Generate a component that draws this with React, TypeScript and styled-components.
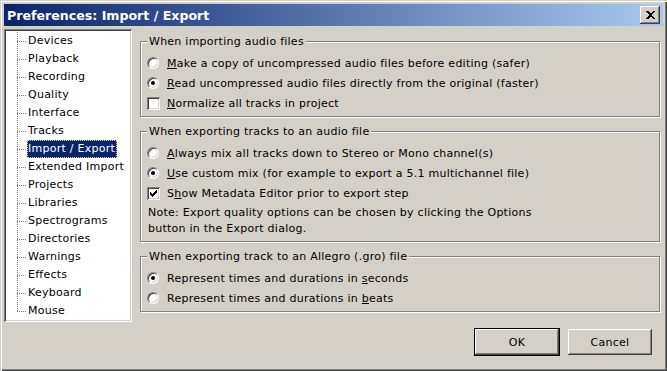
import React from 'react';
import styled, {createGlobalStyle} from "styled-components";

const GlobalStyle = createGlobalStyle`
  html, body {
    margin: 0;
    padding: 0;
    background: #d4d0c8;
  }
  body {
    font-family: "DejaVu Sans", sans-serif;
    font-size: 11px;
    letter-spacing: 0.25px;
    color: #000;
  }
`

const pages = [
    'Devices', 'Playback', 'Recording', 'Quality', 'Interface', 'Tracks',
    'Import / Export', 'Extended Import', 'Projects', 'Libraries', 'Spectrograms',
    'Directories', 'Warnings', 'Effects', 'Keyboard', 'Mouse',
]

const Radio = (props: { checked?: boolean }) => (
    <RadioBox $checked={props.checked}/>
)

const CheckBox = (props: { checked?: boolean }) => (
    <Check>
        {props.checked && (
            <svg width="7" height="7" viewBox="0 0 7 7" shapeRendering="crispEdges">
                <path d="M0 2h1v1h1v1h1v-1h1v-1h1v-1h1v-1h1v3h-1v1h-1v1h-1v1h-1v1h-1v-1h-1v-1h-1z" fill="#000"/>
            </svg>
        )}
    </Check>
)

const App = () => {
    return (
        <Window>
            <GlobalStyle/>
            <TitleBar>
                <Title>Preferences: Import / Export</Title>
                <CloseButton>
                    <svg width="9" height="8" viewBox="0 0 9 8" shapeRendering="crispEdges">
                        <path d="M0 0h2l2.5 2.5L7 0h2L5.5 4L9 8H7L4.5 5.5L2 8H0l3.5-4z" fill="#000"/>
                    </svg>
                </CloseButton>
            </TitleBar>

            <Body>
                <Tree>
                    {pages.map((p, i) => (
                        <TreeRow key={p}>
                            <Connector $last={i === pages.length - 1}/>
                            <TreeLabel $selected={p === 'Import / Export'}>{p}</TreeLabel>
                        </TreeRow>
                    ))}
                </Tree>

                <Pane>
                    <Group>
                        <Caption>When importing audio files</Caption>
                        <Row><Radio/><span><u>M</u>ake a copy of uncompressed audio files before editing (safer)</span></Row>
                        <Row><Radio checked/><span><u>R</u>ead uncompressed audio files directly from the original (faster)</span></Row>
                        <Row><CheckBox/><span><u>N</u>ormalize all tracks in project</span></Row>
                    </Group>

                    <Group $bottom={4}>
                        <Caption>When exporting tracks to an audio file</Caption>
                        <Row><Radio/><span><u>A</u>lways mix all tracks down to Stereo or Mono channel(s)</span></Row>
                        <Row><Radio checked/><span><u>U</u>se custom mix (for example to export a 5.1 multichannel file)</span></Row>
                        <Row><CheckBox checked/><span>S<u>h</u>ow Metadata Editor prior to export step</span></Row>
                        <Note>
                            Note: Export quality options can be chosen by clicking the Options<br/>
                            button in the Export dialog.
                        </Note>
                    </Group>

                    <Group>
                        <Caption>When exporting track to an Allegro (.gro) file</Caption>
                        <Row><Radio checked/><span>Represent times and durations in <u>s</u>econds</span></Row>
                        <Row><Radio/><span>Represent times and durations in <u>b</u>eats</span></Row>
                    </Group>
                </Pane>
            </Body>

            <Footer>
                <Button $default>OK</Button>
                <Button>Cancel</Button>
            </Footer>
        </Window>
    );
};

export default App;

const raised = `
  box-shadow: inset -1px -1px #404040, inset 1px 1px #fff,
              inset -2px -2px #808080, inset 2px 2px #d4d0c8;
`

const Window = styled.div`
  width: 667px;
  height: 371px;
  box-sizing: border-box;
  padding: 4px;
  display: flex;
  flex-direction: column;
  background: #d4d0c8;
  box-shadow: inset 1px 1px #d4d0c8, inset 2px 2px #fff,
              inset -1px -1px #404040, inset -2px -2px #808080;
`

const TitleBar = styled.div`
  height: 22px;
  flex: none;
  display: flex;
  align-items: center;
  justify-content: space-between;
  padding: 0 3px;
  background: linear-gradient(to right, #0a246a, #a6caf0);
`

const Title = styled.div`
  color: #fff;
  font-weight: bold;
  font-size: 12.6px;
  letter-spacing: 0;
  font-family: "DejaVu Sans", sans-serif;
`

const CloseButton = styled.div`
  width: 20px;
  height: 18px;
  display: grid;
  place-items: center;
  background: #d4d0c8;
  ${raised}
`

const Body = styled.div`
  display: flex;
  gap: 8px;
  padding-top: 3px;
`

const Tree = styled.div`
  width: 128px;
  height: 293px;
  box-sizing: border-box;
  padding: 3px 0 0 13px;
  background: #fff;
  box-shadow: inset 1px 1px #808080, inset -1px -1px #fff,
              inset 2px 2px #404040, inset -2px -2px #d4d0c8;
`

const TreeRow = styled.div`
  height: 18px;
  display: flex;
  align-items: center;
`

const Connector = styled.span<{ $last?: boolean }>`
  width: 10px;
  height: 18px;
  flex: none;
  background:
    repeating-linear-gradient(to right, #808080 0 1px, transparent 1px 2px) 0 9px / 9px 1px no-repeat,
    repeating-linear-gradient(to bottom, #808080 0 1px, transparent 1px 2px) 0 0 / 1px ${p => p.$last ? '10px' : '18px'} no-repeat;
`

const TreeLabel = styled.span<{ $selected?: boolean }>`
  height: 18px;
  line-height: 18px;
  padding: 0 2px 0 1px;
  white-space: nowrap;
  color: ${p => p.$selected ? '#fff' : '#000'};
  background: ${p => p.$selected ? '#0a246a' : 'transparent'};
  outline: ${p => p.$selected ? '1px dotted #e8d890' : 'none'};
  outline-offset: -1px;
`

const Pane = styled.div`
  flex: 1;
  display: flex;
  flex-direction: column;
  gap: 14px;
  padding: 12px 3px 0 0;
`

const Group = styled.div<{ $bottom?: number }>`
  display: flex;
  flex-direction: column;
  padding: 0 6px ${p => p.$bottom ?? 3}px 6px;
  border: 1px solid #808080;
  box-shadow: inset 1px 1px #fff, 1px 1px #fff;
`

const Caption = styled.div`
  align-self: flex-start;
  margin: -7px 0 5px 0;
  padding: 0 2px;
  line-height: 13px;
  background: #d4d0c8;
`

const Row = styled.div`
  height: 20px;
  display: flex;
  align-items: center;
  gap: 7px;
  white-space: nowrap;
`

const RadioBox = styled.span<{ $checked?: boolean }>`
  width: 12px;
  height: 12px;
  margin-right: 1px;
  box-sizing: border-box;
  flex: none;
  display: grid;
  place-items: center;
  border-radius: 50%;
  background: #fff;
  border: 1px solid;
  border-color: #808080 #fff #fff #808080;
  box-shadow: inset 1px 1px #404040, inset -1px -1px #d4d0c8;

  &::after {
    content: "";
    width: 4px;
    height: 4px;
    border-radius: 50%;
    background: ${p => p.$checked ? '#000' : 'transparent'};
  }
`

const Check = styled.span`
  width: 13px;
  height: 13px;
  box-sizing: border-box;
  flex: none;
  display: grid;
  place-items: center;
  background: #fff;
  box-shadow: inset 1px 1px #808080, inset -1px -1px #fff,
              inset 2px 2px #404040, inset -2px -2px #d4d0c8;
`

const Note = styled.div`
  margin: 2px 0 0 1px;
  line-height: 16px;
`

const Footer = styled.div`
  display: flex;
  justify-content: flex-end;
  gap: 7px;
  padding: 6px 10px 0 0;
`

const Button = styled.div<{ $default?: boolean }>`
  width: 86px;
  height: 28px;
  box-sizing: border-box;
  display: grid;
  place-items: center;
  background: #d4d0c8;
  border: 1px solid ${p => p.$default ? '#000' : 'transparent'};
  ${raised}
`
